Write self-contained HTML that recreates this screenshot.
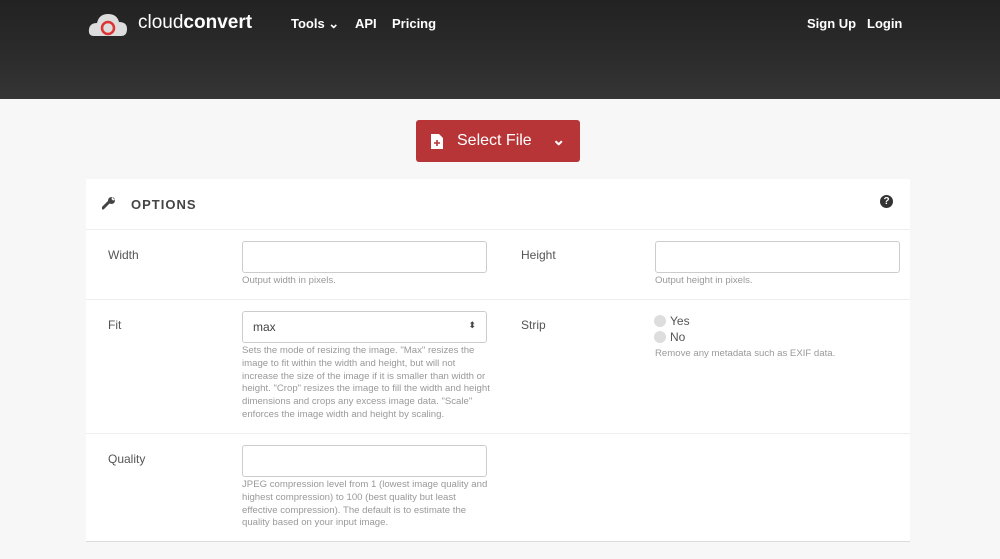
<!DOCTYPE html>
<html><head><style>
*{margin:0;padding:0;box-sizing:border-box}
body{width:1000px;height:559px;overflow:hidden;background:#f7f7f7;font-family:"Liberation Sans",sans-serif;color:#555;position:relative}
.hdr{position:absolute;left:0;top:0;width:1000px;height:99px;background:linear-gradient(#222,#2c2c2c 60%,#353535)}
.hdr span{position:absolute;color:#fff;font-weight:bold;font-size:13px;top:16px}
.logo{position:absolute;left:138px;top:12px;color:#fff;font-size:19px}
.btn{position:absolute;left:416px;top:120px;width:164px;height:42px;background:#b83537;border-radius:3px;color:#fff;font-size:16px}
.panel{position:absolute;left:86px;top:179px;width:824px;height:363px;background:#fff;border-bottom:1px solid #ddd}
.row{position:absolute;left:0;width:824px;border-top:1px solid #eee}
.lbl{position:absolute;font-size:12px;color:#555}
.inp{position:absolute;width:245px;height:32px;border:1px solid #ccc;border-radius:3px;background:#fff}
.help{position:absolute;font-size:9.6px;color:#999;line-height:12.8px}
</style></head><body>
<div class="hdr">
<svg style="position:absolute;left:88px;top:12px" width="40" height="26" viewBox="0 0 40 26"><path d="M6 24 Q0 24 1 17 Q2 11 9 11 Q11 2 20 2 Q29 2 31 10 Q39 10 39 17 Q39 24 33 24Z" fill="#ddd"/><circle cx="20" cy="16" r="6" fill="none" stroke="#d33" stroke-width="2.5"/></svg>
<div class="logo">cloud<b>convert</b></div>
<span style="left:291px">Tools ⌄</span><span style="left:355px">API</span><span style="left:392px">Pricing</span>
<span style="left:807px">Sign Up</span><span style="left:867px">Login</span>
</div>
<div class="btn"><svg style="position:absolute;left:15px;top:14px" width="12" height="15"><path d="M0 0H8L12 4V15H0Z" fill="#fff"/><path d="M6 6V12M3 9H9" stroke="#b83537" stroke-width="1.6"/></svg><span style="position:absolute;left:41px;top:12px">Select File</span><span style="position:absolute;left:136px;top:10px;font-weight:bold">⌄</span></div>
<div class="panel">
<svg style="position:absolute;left:16px;top:17px" width="14" height="14" viewBox="0 0 14 14"><path d="M1 12 L7 6" stroke="#444" stroke-width="3" stroke-linecap="round"/><circle cx="9.5" cy="4.5" r="3.5" fill="#444"/><path d="M10 1 L13 4 L11 4.5 L9.5 3Z" fill="#fff"/></svg>
<div style="position:absolute;left:45px;top:18px;font-size:13px;font-weight:bold;letter-spacing:1px;color:#444">OPTIONS</div>
<div style="position:absolute;left:794px;top:16px;width:13px;height:13px;border-radius:50%;background:#333;color:#fff;font-size:10px;font-weight:bold;text-align:center;line-height:13px">?</div>
<div class="row" style="top:50px;height:70px">
<div class="lbl" style="left:22px;top:18px">Width</div><div class="inp" style="left:156px;top:11px"></div><div class="help" style="left:156px;top:45px">Output width in pixels.</div>
<div class="lbl" style="left:435px;top:18px">Height</div><div class="inp" style="left:569px;top:11px"></div><div class="help" style="left:569px;top:45px">Output height in pixels.</div></div>
<div class="row" style="top:120px;height:134px">
<div class="lbl" style="left:22px;top:18px">Fit</div><div class="inp" style="left:156px;top:11px;font-size:12px;padding:8px 10px;color:#444">max<span style="float:right;font-size:9px">⬍</span></div>
<div class="help" style="left:156px;top:45px;width:248px">Sets the mode of resizing the image. "Max" resizes the image to fit within the width and height, but will not increase the size of the image if it is smaller than width or height. "Crop" resizes the image to fill the width and height dimensions and crops any excess image data. "Scale" enforces the image width and height by scaling.</div>
<div class="lbl" style="left:435px;top:18px">Strip</div>
<div style="position:absolute;left:568px;top:13px;font-size:12px;line-height:16px"><span style="display:inline-block;width:12px;height:12px;border-radius:50%;background:#ddd;vertical-align:-2px;margin-right:4px"></span>Yes<br><span style="display:inline-block;width:12px;height:12px;border-radius:50%;background:#ddd;vertical-align:-2px;margin-right:4px"></span>No</div>
<div class="help" style="left:569px;top:48px">Remove any metadata such as EXIF data.</div></div>
<div class="row" style="top:254px;height:109px">
<div class="lbl" style="left:22px;top:18px">Quality</div><div class="inp" style="left:156px;top:11px"></div>
<div class="help" style="left:156px;top:45px;width:248px">JPEG compression level from 1 (lowest image quality and highest compression) to 100 (best quality but least effective compression). The default is to estimate the quality based on your input image.</div></div>
</div>
</body></html>
